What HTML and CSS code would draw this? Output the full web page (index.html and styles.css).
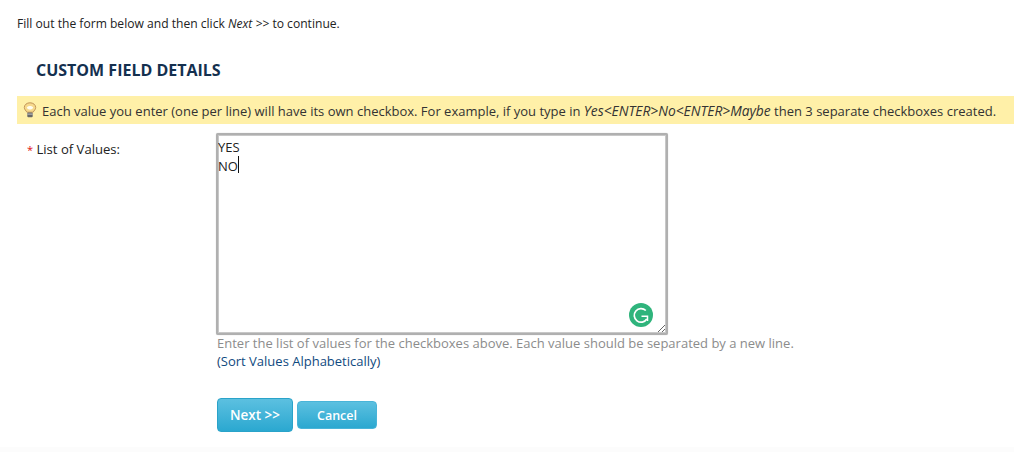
FILE: index.html
```html
<!DOCTYPE html>
<html lang="en">
<head>
    <meta charset="UTF-8">
    <meta name="viewport" content="width=device-width, initial-scale=1.0">
    <title>Custom Field Details</title>
    <link rel="stylesheet" href="styles.css">
</head>
<body>
    <div class="page">
        <p class="intro">Fill out the form below and then click <em>Next &gt;&gt;</em> to continue.</p>
        <h2 class="section-title">CUSTOM FIELD DETAILS</h2>
        <div class="hint">
            <svg class="hint-icon" width="16" height="16" viewBox="0 0 16 16">
                <path d="M8 .8C4.800.8 2.300 2.800 2.300 5.500c0 2 1.600 3 2.600 4.700h6.200c1-1.700 2.600-2.700 2.600-4.700C13.700 2.800 11.200.8 8 .8z" fill="#f7d98c" stroke="#c2965a" stroke-width="1"/>
                <path d="M4.800 5.800C5.600 3.500 10.400 3.500 11.200 5.800 10.200 8.200 5.800 8.200 4.800 5.800z" fill="#fffdf0"/>
                <rect x="5.300" y="10.500" width="5.400" height="4.700" rx="1" fill="#666"/>
                <rect x="5.300" y="11.600" width="5.400" height="1" fill="#c4c4c4"/>
            </svg>
            <span>Each value you enter (one per line) will have its own checkbox. For example, if you type in <em>Yes&lt;ENTER&gt;No&lt;ENTER&gt;Maybe</em> then 3 separate checkboxes created.</span>
        </div>
        <div class="form-row">
            <label class="field-label" for="values"><span class="req">*</span> List of Values:</label>
            <div class="field">
                <div class="textarea-wrap">
                    <textarea id="values" class="values-box">YES
NO</textarea>
                    <span class="caret"></span>
                    <svg class="grammarly" width="24" height="24" viewBox="0 0 24 24">
                        <circle cx="12" cy="12" r="12" fill="#2fb47c"/>
                        <path d="M16.800 7.500A6.800 6.800 0 1 0 17.800 16" fill="none" stroke="#fff" stroke-width="1.700"/>
                        <path d="M12.500 13.200h6v4.800" fill="none" stroke="#fff" stroke-width="1.500"/>
                    </svg>
                </div>
                <div class="help">Enter the list of values for the checkboxes above. Each value should be separated by a new line.</div>
                <div class="sort">(<a href="#">Sort Values Alphabetically</a>)</div>
            </div>
        </div>
        <div class="buttons">
            <button class="btn btn-next">Next &gt;&gt;</button>
            <button class="btn btn-cancel">Cancel</button>
        </div>
    </div>
</body>
</html>
```

FILE: styles.css
```css
body {
    font-family: "Open Sans", sans-serif;
    font-size: 12px;
    color: #222;
    background-color: #fcfcfc;
    margin: 0;
    overflow: hidden;
}
.page {
    height: 447px;
    box-sizing: border-box;
    padding-left: 17px;
    background-color: #fff;
}
.intro {
    margin: 0;
    padding-top: 15px;
    font-size: 12.100px;
    line-height: 17px;
}
.section-title {
    margin: 27px 0 0 19px;
    font-size: 16px;
    line-height: 22px;
    font-weight: 700;
    color: #14304f;
}
.hint {
    display: flex;
    align-items: center;
    height: 28px;
    margin-top: 15px;
    padding-left: 5px;
    background-color: #fff0a8;
    color: #333;
    font-size: 13px;
    white-space: nowrap;
}
.hint em {
    font-size: 13.800px;
}
.hint-icon {
    margin-right: 4px;
    flex: none;
}
.form-row {
    display: flex;
    margin-top: 9px;
}
.field-label {
    width: 199px;
    padding: 8px 0 0 10px;
    box-sizing: border-box;
    font-size: 13.100px;
    line-height: 17px;
    color: #222;
}
.req {
    color: #e01010;
    font-size: 11px;
}
.textarea-wrap {
    position: relative;
    width: 452px;
    height: 202px;
}
.values-box {
    display: block;
    width: 100%;
    height: 100%;
    box-sizing: border-box;
    border: 2px solid #b0b0b0;
    border-radius: 2px;
    box-shadow: inset 0 0 0 1px #c8c8c8, 0 0 1px #bbb;
    padding: 3px 0 0 0;
    font-family: "Open Sans", sans-serif;
    font-size: 13px;
    line-height: 19px;
    color: #222;
    outline: none;
}
.caret {
    position: absolute;
    left: 22px;
    top: 23px;
    width: 1px;
    height: 17px;
    background-color: #111;
}
.grammarly {
    position: absolute;
    right: 15px;
    bottom: 8px;
}
.help {
    margin-left: 1px;
    font-size: 13px;
    line-height: 17px;
    color: #8c8c8c;
}
.sort {
    margin-left: 1px;
    font-size: 13px;
    line-height: 19px;
    color: #14406e;
}
.sort a {
    color: #0f4a80;
    text-decoration: none;
}
.buttons {
    display: flex;
    align-items: center;
    gap: 4px;
    margin: 27px 0 0 200px;
}
.btn {
    border: 1px solid #2aa3c9;
    border-radius: 4px;
    color: #fff;
    font-family: "Open Sans", sans-serif;
    font-weight: 600;
    background: linear-gradient(#5cc0e0, #2ba8d0);
    cursor: pointer;
    padding: 0;
}
.btn-next {
    width: 76px;
    height: 34px;
    font-size: 13.500px;
}
.btn-cancel {
    width: 80px;
    height: 28px;
    font-size: 12.500px;
    border-color: #49b4d8;
}
```
